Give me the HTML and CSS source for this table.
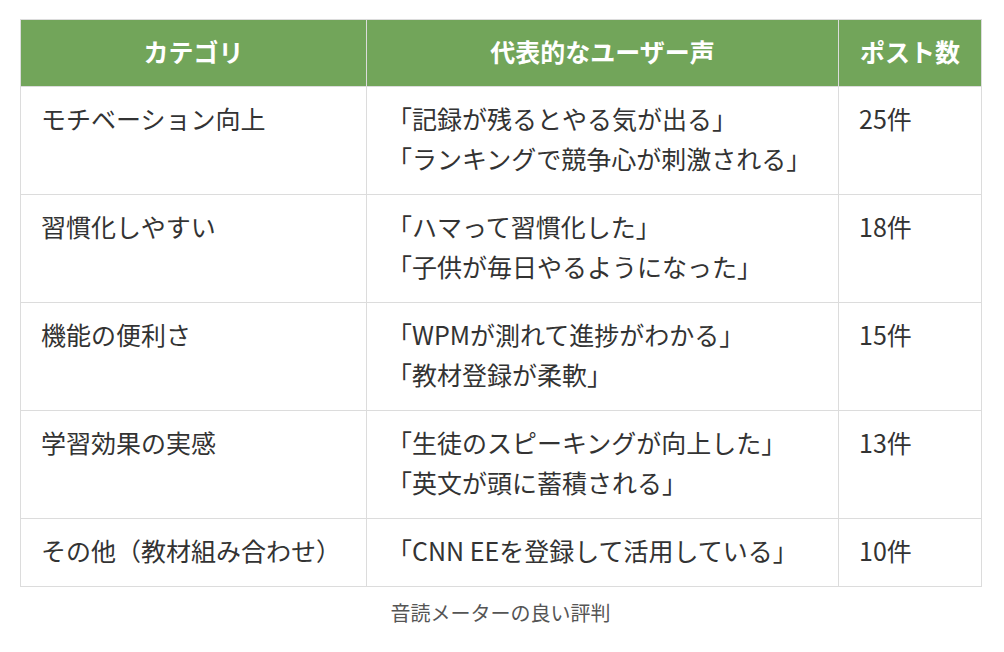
FILE: index.html
```html
<!DOCTYPE html>
<html lang="ja">
<head>
<meta charset="utf-8">
<link rel="stylesheet" href="styles.css">
</head>
<body>
<figure class="review">
  <table class="review-table">
    <colgroup>
      <col class="c1">
      <col class="c2">
      <col class="c3">
    </colgroup>
    <thead>
      <tr><th>カテゴリ</th><th>代表的なユーザー声</th><th>ポスト数</th></tr>
    </thead>
    <tbody>
      <tr><td>モチベーション向上</td><td>「記録が残るとやる気が出る」<br>「ランキングで競争心が刺激される」</td><td>25件</td></tr>
      <tr><td>習慣化しやすい</td><td>「ハマって習慣化した」<br>「子供が毎日やるようになった」</td><td>18件</td></tr>
      <tr><td>機能の便利さ</td><td>「WPMが測れて進捗がわかる」<br>「教材登録が柔軟」</td><td>15件</td></tr>
      <tr><td>学習効果の実感</td><td>「生徒のスピーキングが向上した」<br>「英文が頭に蓄積される」</td><td>13件</td></tr>
      <tr><td>その他（教材組み合わせ）</td><td>「CNN EEを登録して活用している」</td><td>10件</td></tr>
    </tbody>
  </table>
  <figcaption class="caption">音読メーターの良い評判</figcaption>
</figure>
</body>
</html>
```
FILE: styles.css
```css
html, body {
  margin: 0;
  padding: 0;
  background: #fff;
}
body {
  font-family: "Noto Sans CJK JP", "Noto Sans", sans-serif;
  color: #333;
}
.review {
  margin: 0;
  padding: 19px 20px 0 20px;
}
.review-table {
  width: 961px;
  border-collapse: collapse;
  table-layout: fixed;
  font-size: 25px;
  line-height: 40px;
}
.c1 { width: 346px; }
.c2 { width: 472px; }
.c3 { width: 143px; }
.review-table th,
.review-table td {
  border: 1px solid #dcdcdc;
  padding: 11px 20px 16px;
  vertical-align: top;
  text-align: left;
}
.review-table th {
  background: #72a55a;
  color: #fff;
  font-weight: 700;
  text-align: center;
  line-height: 38px;
  padding: 12px 10px 16px;
  border-color: #dcdcdc;
}
.caption {
  text-align: center;
  width: 961px;
  font-size: 20px;
  line-height: 28px;
  color: #555;
  margin-top: 12px;
}
```
